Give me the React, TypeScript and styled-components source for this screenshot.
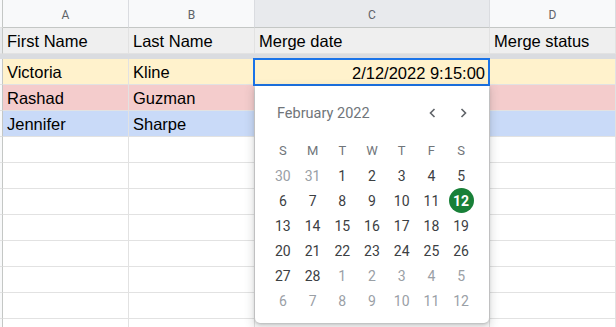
import React from 'react';
import styled, { createGlobalStyle } from 'styled-components';

const GlobalStyle = createGlobalStyle`
  body {
    margin: 0;
    background: #ffffff;
    overflow: hidden;
    font-family: "Liberation Sans", Arial, sans-serif;
  }
`;

const COLS = '3px 126px 126px 235px 1fr';

const Sheet = styled.div`
  position: relative;
  width: 616px;
  height: 327px;
  overflow: hidden;
`;

const Row = styled.div<{ $h: number }>`
  display: grid;
  grid-template-columns: ${COLS};
  height: ${(p) => p.$h}px;
`;

const Gutter = styled.div<{ $bg?: string }>`
  background: ${(p) => p.$bg || '#f8f9fa'};
  border-right: 1px solid #c4c7c5;
  border-bottom: 1px solid #e2e2e2;
`;

const ColHead = styled.div<{ $active?: boolean }>`
  display: flex;
  align-items: center;
  justify-content: center;
  padding-top: 2px;
  background: ${(p) => (p.$active ? '#e8eaed' : '#f8f9fa')};
  border-right: 1px solid #dadce0;
  border-bottom: 1px solid #c4c7c5;
  font-family: Roboto, "Liberation Sans", sans-serif;
  font-size: 12px;
  color: #5f6368;
`;

const Cell = styled.div<{ $bg?: string }>`
  display: flex;
  align-items: center;
  padding: 2px 4px 0 4px;
  background: ${(p) => p.$bg || '#ffffff'};
  border-right: 1px solid #e2e2e2;
  border-bottom: 1px solid #e2e2e2;
  font-size: 16.5px;
  color: #000;
  white-space: nowrap;
  overflow: hidden;
`;

const FreezeBar = styled.div`
  height: 5px;
  background: #dadce0;
`;

const Selection = styled.div`
  position: absolute;
  left: 253px;
  top: 58px;
  width: 237px;
  height: 28px;
  box-sizing: border-box;
  border: 2px solid #1a73e8;
  display: flex;
  align-items: center;
  justify-content: flex-end;
  padding: 2px 3px 0 0;
  font-size: 16.5px;
  color: #000;
`;

const Picker = styled.div`
  position: absolute;
  left: 255px;
  top: 86px;
  width: 234px;
  height: 237px;
  box-sizing: border-box;
  background: #fff;
  border-radius: 0 0 5px 5px;
  box-shadow: 0 1px 3px rgba(60, 64, 67, 0.3), 0 4px 8px 3px rgba(60, 64, 67, 0.15);
  padding: 15px 13px 0 13px;
  font-family: Roboto, "Liberation Sans", sans-serif;
`;

const PickerHead = styled.div`
  display: flex;
  align-items: center;
  height: 24px;
  padding-left: 9px;
  margin: 0 -2px 13px 0;
`;

const Month = styled.div`
  flex: 1;
  font-size: 14.5px;
  color: #70757a;
`;

const Nav = styled.button`
  width: 30px;
  height: 24px;
  padding: 0;
  border: none;
  background: none;
  display: flex;
  align-items: center;
  justify-content: center;
  color: #5f6368;
`;

const Days = styled.div`
  display: grid;
  grid-template-columns: repeat(7, 1fr);
  grid-auto-rows: 25px;
`;

const Weekday = styled.div`
  display: flex;
  align-items: center;
  justify-content: center;
  font-size: 13px;
  color: #70757a;
`;

const Day = styled.div<{ $muted?: boolean; $selected?: boolean }>`
  display: flex;
  align-items: center;
  justify-content: center;
  font-size: 14px;
  color: ${(p) => (p.$selected ? '#fff' : p.$muted ? '#9aa0a6' : '#3c4043')};
  font-weight: ${(p) => (p.$selected ? 700 : 400)};
  span {
    width: 25px;
    height: 25px;
    border-radius: 50%;
    display: flex;
    align-items: center;
    justify-content: center;
    background: ${(p) => (p.$selected ? '#188038' : 'transparent')};
  }
`;

const Chevron = ({ dir }: { dir: 'left' | 'right' }) => (
  <svg width="12" height="12" viewBox="0 0 12 12" fill="none">
    <path
      d={dir === 'left' ? 'M7.5 2 L3.5 6 L7.5 10' : 'M4.5 2 L8.5 6 L4.5 10'}
      stroke="currentColor"
      strokeWidth="1.6"
    />
  </svg>
);

const people = [
  { first: 'Victoria', last: 'Kline', bg: '#fff2cc' },
  { first: 'Rashad', last: 'Guzman', bg: '#f4cccc' },
  { first: 'Jennifer', last: 'Sharpe', bg: '#c9daf8' }
];

const weekdays = ['S', 'M', 'T', 'W', 'T', 'F', 'S'];

const buildDays = () => {
  const list: { n: number; muted: boolean }[] = [];
  list.push({ n: 30, muted: true }, { n: 31, muted: true });
  for (let i = 1; i <= 28; i++) list.push({ n: i, muted: false });
  for (let i = 1; i <= 12; i++) list.push({ n: i, muted: true });
  return list;
};

const App: React.FC = () => {
  const days = buildDays();
  return (
    <Sheet>
      <GlobalStyle />
      <Row $h={28}>
        <Gutter />
        <ColHead>A</ColHead>
        <ColHead>B</ColHead>
        <ColHead $active>C</ColHead>
        <ColHead>D</ColHead>
      </Row>
      <Row $h={26}>
        <Gutter $bg="#e8eaed" />
        <Cell $bg="#efefef">First Name</Cell>
        <Cell $bg="#efefef">Last Name</Cell>
        <Cell $bg="#efefef">Merge date</Cell>
        <Cell $bg="#efefef">Merge status</Cell>
      </Row>
      <FreezeBar />
      {people.map((p) => (
        <Row $h={26} key={p.first}>
          <Gutter />
          <Cell $bg={p.bg}>{p.first}</Cell>
          <Cell $bg={p.bg}>{p.last}</Cell>
          <Cell $bg={p.bg} />
          <Cell $bg={p.bg} />
        </Row>
      ))}
      {Array.from({ length: 8 }).map((_, i) => (
        <Row $h={26} key={i}>
          <Gutter />
          <Cell />
          <Cell />
          <Cell />
          <Cell />
        </Row>
      ))}
      <Selection>2/12/2022 9:15:00</Selection>
      <Picker>
        <PickerHead>
          <Month>February 2022</Month>
          <Nav>
            <Chevron dir="left" />
          </Nav>
          <Nav>
            <Chevron dir="right" />
          </Nav>
        </PickerHead>
        <Days>
          {weekdays.map((w, i) => (
            <Weekday key={i}>{w}</Weekday>
          ))}
          {days.map((d, i) => (
            <Day key={i} $muted={d.muted} $selected={!d.muted && d.n === 12}>
              <span>{d.n}</span>
            </Day>
          ))}
        </Days>
      </Picker>
    </Sheet>
  );
};

export default App;
